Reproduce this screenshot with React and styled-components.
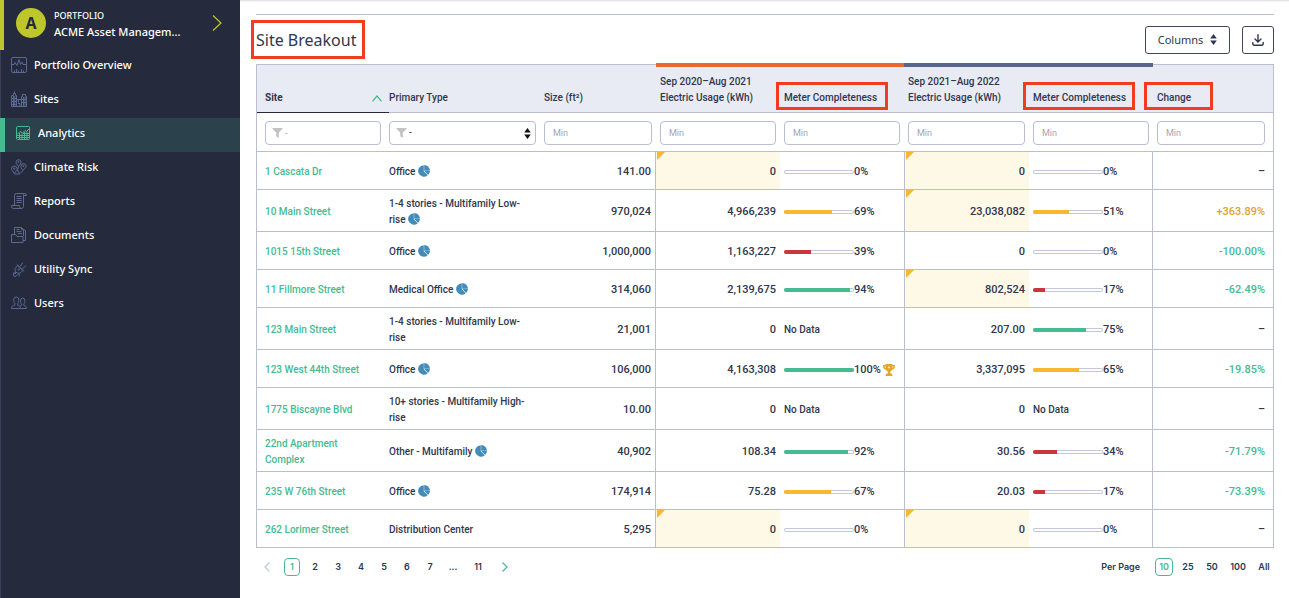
import React from 'react';
import styled, { createGlobalStyle } from 'styled-components';

const GlobalStyle = createGlobalStyle`
    *, *::before, *::after {
        box-sizing: border-box;
    }

    body {
        margin: 0;
        background: #ffffff;
        color: #2f374e;
        font-family: Roboto, "Liberation Sans", sans-serif;
        font-size: 10px;
        line-height: 16px;
    }

    button, input, select {
        font: inherit;
        color: inherit;
        margin: 0;
    }
`

const Page = styled.div`
    display: flex;
    min-height: 100vh;
`

const Sidebar = styled.nav`
    flex: 0 0 240px;
    background: #252b3d;
    box-shadow: inset 1px 0 0 #3a4157;
    color: #ffffff;
    font-family: "Noto Sans", sans-serif;
`

const Account = styled.button`
    display: flex;
    align-items: center;
    width: 100%;
    height: 50px;
    padding: 0 18px 4px 12px;
    border: 0;
    border-left: 4px solid #bdc72c;
    background: none;
    text-align: left;
`

const Avatar = styled.span`
    width: 30px;
    height: 30px;
    margin-right: 8px;
    border-radius: 50%;
    background: #bdc72c;
    color: #252b3d;
    font-size: 16px;
    font-weight: 700;
    line-height: 30px;
    text-align: center;
`

const AccountText = styled.span`
    flex: 1;
    display: flex;
    flex-direction: column;
    padding-top: 2px;
    font-size: 11px;
    font-weight: 500;
`

const AccountKind = styled.span`
    font-size: 9px;
`

const NavList = styled.ul`
    margin: 0;
    padding: 0;
    list-style: none;
`

const NavLink = styled.a`
    display: flex;
    align-items: center;
    gap: 7px;
    height: 34px;
    padding: 0 0 4px 10px;
    border-left: ${props => props.$active ? '5px solid #46ba91' : '1px solid transparent'};
    background: ${props => props.$active ? '#2b414c' : 'none'};
    color: #ffffff;
    font-size: 11px;
    font-weight: 500;
    text-decoration: none;

    svg {
        color: ${props => props.$active ? '#46ba91' : '#5a6a93'};
    }
`

const Main = styled.main`
    flex: 1;
    min-width: 0;
    padding: 14px 15px 0 16px;
    box-shadow: inset 0 3px 2px -2px #dcdcdf;
`

const Toolbar = styled.header`
    display: flex;
    align-items: center;
    gap: 12px;
    height: 50px;
    border-top: 1px solid #b9bfd0;
`

const TitleBox = styled.div`
    flex: 1;
`

const Title = styled.h1`
    position: relative;
    display: inline-block;
    margin: 0;
    font-family: "Noto Sans", sans-serif;
    font-size: 16px;
    font-weight: 400;
    line-height: 24px;
`

const Frame = styled.span`
    position: absolute;
    top: ${props => props.$top};
    left: ${props => props.$left};
    width: ${props => props.$width};
    height: ${props => props.$height};
    border: 3px solid #f23c22;
    pointer-events: none;
`

const ToolButton = styled.button`
    display: flex;
    align-items: center;
    justify-content: center;
    gap: 7px;
    width: ${props => props.$width};
    height: 28px;
    padding: 0;
    border: 1px solid #3f475d;
    border-radius: 3px;
    background: #ffffff;
    font-family: "Noto Sans", sans-serif;
    font-size: 11px;
`

const Table = styled.table`
    width: 100%;
    table-layout: fixed;
    border: 1px solid #b9bfd0;
    border-bottom: 0;
    border-collapse: separate;
    border-spacing: 0;
`

const Col = styled.col`
    width: ${props => props.$width};
`

const HeadCell = styled.th`
    position: relative;
    height: 48px;
    padding: 0 4px 6px;
    border-bottom: 1px solid ${props => props.$sorted ? '#252b3d' : '#b9bfd0'};
    background: #e9ebf4;
    font-weight: ${props => props.$sorted ? 700 : 500};
    text-align: left;
    vertical-align: bottom;
    white-space: nowrap;

    &:first-child {
        padding-left: 8px;
        padding-right: 7px;
    }

    &:nth-child(2) {
        padding-left: 0;
    }
`

const PeriodBar = styled.span`
    position: absolute;
    top: -2px;
    left: 0;
    right: 0;
    height: 4px;
    background: ${props => props.$color};
`

const SortButton = styled.button`
    display: flex;
    align-items: center;
    justify-content: space-between;
    width: 100%;
    padding: 0;
    border: 0;
    background: none;
`

const FilterCell = styled.td`
    height: 39px;
    padding: 2px 4px 0;
    border-bottom: 1px solid #b9bfd0;

    &:first-child {
        padding-left: 8px;
        padding-right: 8px;
    }

    &:nth-child(2) {
        padding-left: 0;
    }

    &:last-child {
        padding-right: 8px;
    }
`

const Field = styled.label`
    display: flex;
    align-items: center;
    gap: 2px;
    height: 24px;
    padding: 0 4px 0 ${props => props.$icon ? '6px' : '8px'};
    border: 1px solid #b9bfd0;
    border-radius: 4px;
    background: #ffffff;

    input, select {
        flex: 1;
        min-width: 0;
        width: 100%;
        height: 20px;
        padding: 0;
        border: 0;
        outline: 0;
        background: none;
        appearance: none;
    }

    input {
        font-size: 9px;
    }

    input::placeholder {
        color: #a3a6ae;
        opacity: 1;
    }
`

const Cell = styled.td`
    position: relative;
    height: 38px;
    padding: 6px 4px 3px;
    border-bottom: 1px solid #b9bfd0;
    background: ${props => props.$flagged ? '#fef8e6' : 'none'};
    color: ${props => props.$color || 'inherit'};
    font-weight: 500;
    text-align: left;

    &:first-child {
        padding-left: 8px;
        padding-right: 16px;
    }

    &:nth-child(2) {
        padding-left: 0;
    }

    &:nth-child(3), &:nth-child(7) {
        border-right: 1px solid #b9bfd0;
    }

    &:nth-child(6) {
        border-left: 1px solid #b9bfd0;
    }

    &:last-child {
        padding-right: 8px;
    }
`

const NumberCell = styled(Cell)`
    font-size: 11px;
    text-align: right;
`

const Flag = styled.span`
    position: absolute;
    top: 0;
    left: 1px;
    border-top: 8px solid #fbb62f;
    border-right: 8px solid transparent;
`

const SiteLink = styled.a`
    color: #46ba91;
    text-decoration: none;
`

const Completeness = styled.div`
    display: flex;
    align-items: center;
    font-size: 11px;
`

const Track = styled.span`
    width: 70px;
    height: 4px;
    border-radius: 2px;
    box-shadow: inset 0 0 0 1px #c3c8d8;
    overflow: hidden;
`

const Fill = styled.span`
    display: block;
    height: 4px;
    background: ${props => props.$color};
`

const Footer = styled.footer`
    display: flex;
    justify-content: space-between;
    align-items: center;
    padding: 10px 1px 8px 3px;
    font-family: Inter, sans-serif;
    font-size: 9px;
    font-weight: 600;
`

const Pager = styled.div`
    display: flex;
    align-items: center;
    gap: ${props => props.$gap};
`

const PageButton = styled.button`
    display: flex;
    align-items: center;
    justify-content: center;
    width: ${props => props.$width || '16px'};
    height: 18px;
    padding: 0;
    border: 1px solid ${props => props.$active ? '#46ba91' : 'transparent'};
    border-radius: 4px;
    background: none;
    color: ${props => props.$active ? '#46ba91' : 'inherit'};
`

const PerPageLabel = styled.span`
    margin-right: 9px;
`

const PieGlyph = styled.svg`
    vertical-align: -2px;
`

const TrophyGlyph = styled.svg`
    margin-left: 2px;
`

const Pie = () => (
    <PieGlyph width="12" height="12" viewBox="0 0 12 12" aria-label="Mixed use">
        <path d="M5.800.3a5.700 5.700 0 1 0 3.900 9.900L5.800 6.200Z" fill="#438bb9" />
        <path d="M6.200 0v5.800h5.800A5.800 5.800 0 0 0 6.200 0Z" fill="#438bb9" />
        <path d="M6.400 6.100h5.500a5.400 5.400 0 0 1-1.800 3.800Z" fill="#438bb9" />
    </PieGlyph>
);

const Trophy = () => (
    <TrophyGlyph width="12" height="12" viewBox="0 0 12 12" aria-label="Complete">
        <path d="M2.500 0h7v2.500Q9.500 7 7.200 7.700V9.500H8.500Q9.500 10 9.500 12H2.500Q2.500 10 3.500 9.500H4.800V7.700Q2.500 7 2.500 2.500Z" fill="#e3a52b" />
        <path d="M3 1.600H.7Q.6 4.800 3.500 5.200M9 1.600h2.300Q11.400 4.800 8.500 5.200" fill="none" stroke="#e3a52b" strokeWidth="1.400" />
        <path d="m6 2 .4.8.8.1-.6.6.1.9-.7-.4-.7.4.1-.9-.6-.6.8-.1Z" fill="#ffffff" />
    </TrophyGlyph>
);

const UpDown = ({ color }) => (
    <svg width="7" height="11" viewBox="0 0 7 11" fill={color}>
        <path d="M3.500 0 6.800 4.500H.2ZM3.500 11 .2 6.500h6.600Z" />
    </svg>
);

const Funnel = () => (
    <svg width="11" height="10" viewBox="0 0 11 10" fill="#c2c2c4">
        <path d="M0 0h11L6.800 4.700V10L4.200 8.300V4.700Z" />
    </svg>
);

const Chevron = ({ d, width, height, color }) => (
    <svg width={width} height={height} viewBox={`0 0 ${width} ${height}`} fill="none" stroke={color} strokeWidth="1.2">
        <path d={d} />
    </svg>
);

const navItems = [
    {
        label: 'Portfolio Overview',
        icon: <><rect x=".5" y=".5" width="15" height="15" rx="1.500" /><path d="M1 7.500h2l1-2 2 3 2-6 1.500 5L11 5l1 2.500h3M3.500 15.500v-2M5.500 15.500V12M7.500 15.500v-2M10.500 15.500V12M12.500 15.500v-2" /></>,
    },
    {
        label: 'Sites',
        icon: <path d="M.5 15.500V4.500h2V2.500h2v2h1v11ZM5.500 8.500h5v7h-5ZM10.500 15.500V5.500h1v-2h3v2h1v10ZM2.500 5v10M3.800 5v10M.5 7.500h5M.5 10.500h5M.5 13.500h5M7.500 9v2.500M9 12.500v3M7 12.500h2M12.500 6v9M14 6v9M11 8.500h4M11 11.500h4M3.500 2.500V.5M10.500 15.500h5" />,
    },
    {
        label: 'Analytics',
        active: true,
        icon: <><rect x="1.500" y="1.500" width="13" height="13" rx="1" /><path d="m2 9.500 3-3 2.500 1.500L10 5.500l1.500 1 3-3M4.500 8v6.500M7 8.500v6M9.500 7v7.500M12 7v7.500M2 10.500h12M2 12.500h12M8 8.500h6" /></>,
    },
    {
        label: 'Climate Risk',
        icon: <><path d="M7.500 7.500C6 5.500 5 4.500 5 3.200a2.500 2.500 0 0 1 5 0c0 1.300-1 2.300-2.500 4.300ZM3.300 14.500C1.500 12 .5 11 .5 9.800a2.800 2.800 0 0 1 5.600 0c0 1.200-1 2.200-2.800 4.700ZM12 11.500C10.500 9.500 9.800 8.500 9.800 7.300a2.700 2.700 0 0 1 5.400 0c0 1.200-1.700 2.200-3.200 4.200ZM3.300 15h5l3.700-3.500M7.500 7.500l-1 3.500 2 4" /><circle cx="7.500" cy="3" r=".6" /><circle cx="3.300" cy="9.600" r=".8" /><circle cx="12.500" cy="7" r=".7" /></>,
    },
    {
        label: 'Reports',
        icon: <path d="M3.500 12.500V2.500a2 2 0 0 1 2-2h8a2 2 0 0 1 2 2h-3v11a2 2 0 0 1-2 2h-8a2 2 0 0 1-2-2v-1h8v1a2 2 0 0 0 2 2M12.500 2.500a2 2 0 0 1 1-2M5.500 3.500h5M5.500 5.500h5M5.500 7.500h5M5.500 9.500h5" />,
    },
    {
        label: 'Documents',
        icon: <path d="M.5 7.500h4l1.500 2h6v6H.5ZM3.500 7V.5h7l2 2V9M10.500.5v2h2l2 1v10H12M5.500 2.500h3M5.500 4.500h5M7 6.500h4" />,
    },
    {
        label: 'Utility Sync',
        icon: <><path d="m7 4.500 5 5-2 2c-1.500 1-3.500 1-5-.3-1.300-1.500-1.300-3.500-.2-4.700ZM6 3.500l7 7M9 5.500 12 1.500M11.500 8 15 4.500M5 11.200l-2.500 2M5 13l-2-1.500C1.500 13 2.500 15.500 4 15.500c2 0 2-2.500 3.500-2.500s1 2 .5 2.500" /><circle cx="7.800" cy="8.500" r=".7" /></>,
    },
    {
        label: 'Users',
        icon: <path d="M.5 13.500c0-2 1-2.500 3-3.200L4 8.800C2.800 7.500 2.500 5.500 2.800 4A2.500 2.500 0 0 1 7.700 4c.3 1.500 0 3.500-1.200 4.800l.3 1.500c1.700.7 2.700 1.200 2.700 3.200ZM9.500 13.500h6c0-1.800-.8-2.500-2.500-3l-.3-1.300c1-1 1.300-2.700 1.100-4a2.100 2.100 0 0 0-4.200 0c-.2 1.300.1 3 1.100 4l-.3 1.300-1.200.5" />,
    },
];

const GREEN = '#46ba91';
const YELLOW = '#fbb62f';
const RED = '#c8373d';

const rows = [
    { site: '1 Cascata Dr', type: 'Office', pie: true, size: '141.00', a: '0', aFlag: true, aPct: 0, b: '0', bFlag: true, bPct: 0, change: '–' },
    { site: '10 Main Street', type: '1-4 stories - Multifamily Low-rise', pie: true, size: '970,024', a: '4,966,239', aPct: 69, b: '23,038,082', bFlag: true, bPct: 51, change: '+363.89%' },
    { site: '1015 15th Street', type: 'Office', pie: true, size: '1,000,000', a: '1,163,227', aPct: 39, b: '0', bPct: 0, change: '-100.00%' },
    { site: '11 Fillmore Street', type: 'Medical Office', pie: true, size: '314,060', a: '2,139,675', aPct: 94, b: '802,524', bFlag: true, bPct: 17, change: '-62.49%' },
    { site: '123 Main Street', type: '1-4 stories - Multifamily Low-rise', size: '21,001', a: '0', aPct: null, b: '207.00', bPct: 75, change: '–' },
    { site: '123 West 44th Street', type: 'Office', pie: true, size: '106,000', a: '4,163,308', aPct: 100, b: '3,337,095', bPct: 65, change: '-19.85%' },
    { site: '1775 Biscayne Blvd', type: '10+ stories - Multifamily High-rise', size: '10.00', a: '0', aPct: null, b: '0', bPct: null, change: '–' },
    { site: '22nd Apartment Complex', type: 'Other - Multifamily', pie: true, size: '40,902', a: '108.34', aPct: 92, b: '30.56', bPct: 34, change: '-71.79%' },
    { site: '235 W 76th Street', type: 'Office', pie: true, size: '174,914', a: '75.28', aPct: 67, b: '20.03', bPct: 17, change: '-73.39%' },
    { site: '262 Lorimer Street', type: 'Distribution Center', size: '5,295', a: '0', aFlag: true, aPct: 0, b: '0', bFlag: true, bPct: 0, change: '–' },
];

const barColor = pct => {
    if (pct >= 75) return GREEN;
    if (pct >= 50) return YELLOW;
    return RED;
}

const changeColor = change => {
    if (change[0] === '+') return '#dfa32b';
    if (change[0] === '-') return GREEN;
    return undefined;
}

const Meter = ({ pct }) => {
    if (pct === null) return 'No Data';
    return (
        <Completeness>
            <Track><Fill $color={barColor(pct)} style={{ width: `${pct}%` }} /></Track>
            {pct}%
            {pct === 100 && <Trophy />}
        </Completeness>
    );
}

const MinField = ({ label }) => (
    <FilterCell>
        <Field><input placeholder="Min" aria-label={label} /></Field>
    </FilterCell>
);

const SiteRow = ({ row }) => (
    <tr>
        <Cell><SiteLink href="#site">{row.site}</SiteLink></Cell>
        <Cell>{row.type} {row.pie && <Pie />}</Cell>
        <NumberCell>{row.size}</NumberCell>
        <NumberCell $flagged={row.aFlag}>{row.aFlag && <Flag />}{row.a}</NumberCell>
        <Cell><Meter pct={row.aPct} /></Cell>
        <NumberCell $flagged={row.bFlag}>{row.bFlag && <Flag />}{row.b}</NumberCell>
        <Cell><Meter pct={row.bPct} /></Cell>
        <NumberCell $color={changeColor(row.change)}>{row.change}</NumberCell>
    </tr>
);

const App = () => {
    return(
        <Page>
            <GlobalStyle />
            <Sidebar>
                <Account>
                    <Avatar>A</Avatar>
                    <AccountText>
                        <AccountKind>PORTFOLIO</AccountKind>
                        ACME Asset Managem...
                    </AccountText>
                    <Chevron width={10} height={16} color="#bdc72c" d="M1 .5 9 8 1 15.500" />
                </Account>
                <NavList>
                    {navItems.map(item => (
                        <li key={item.label}>
                            <NavLink href="#nav" $active={item.active}>
                                <svg width="16" height="16" viewBox="0 0 16 16" fill="none" stroke="currentColor">{item.icon}</svg>
                                {item.label}
                            </NavLink>
                        </li>
                    ))}
                </NavList>
            </Sidebar>
            <Main>
                <Toolbar>
                    <TitleBox>
                        <Title>
                            Site Breakout
                            <Frame $top="-8px" $left="-5px" $width="114px" $height="39px" />
                        </Title>
                    </TitleBox>
                    <ToolButton $width="85px">Columns <UpDown color="#2f374e" /></ToolButton>
                    <ToolButton $width="32px" aria-label="Download">
                        <svg width="12" height="12" viewBox="0 0 12 12" fill="none" stroke="#2f374e" strokeWidth="1.4" strokeLinecap="round">
                            <path d="M6 .7v7M3 5l3 3 3-3M.8 8.500v1.200q0 1.500 1.500 1.500h7.400q1.500 0 1.500-1.500V8.500" />
                        </svg>
                    </ToolButton>
                </Toolbar>
                <Table>
                    <colgroup>
                        <Col $width="132px" />
                        <Col $width="151px" />
                        <Col $width="116px" />
                        <Col $width="124px" />
                        <Col $width="124px" />
                        <Col $width="125px" />
                        <Col $width="124px" />
                        <Col $width="120px" />
                    </colgroup>
                    <thead>
                        <tr>
                            <HeadCell $sorted>
                                <SortButton>Site <Chevron width={10} height={7} color={GREEN} d="M.5 6.300 5 1l4.500 5.300" /></SortButton>
                            </HeadCell>
                            <HeadCell>Primary Type</HeadCell>
                            <HeadCell>Size (ft²)</HeadCell>
                            <HeadCell><PeriodBar $color="#ee682b" />Sep 2020–Aug 2021<br />Electric Usage (kWh)</HeadCell>
                            <HeadCell>
                                <PeriodBar $color="#ee682b" />
                                Meter Completeness
                                <Frame $top="17px" $left="-4px" $width="112px" $height="28px" />
                            </HeadCell>
                            <HeadCell><PeriodBar $color="#59668b" />Sep 2021–Aug 2022<br />Electric Usage (kWh)</HeadCell>
                            <HeadCell>
                                <PeriodBar $color="#59668b" />
                                Meter Completeness
                                <Frame $top="17px" $left="-6px" $width="112px" $height="28px" />
                            </HeadCell>
                            <HeadCell>
                                Change
                                <Frame $top="17px" $left="-9px" $width="69px" $height="28px" />
                            </HeadCell>
                        </tr>
                    </thead>
                    <tbody>
                        <tr>
                            <FilterCell>
                                <Field $icon><Funnel /><input placeholder="-" aria-label="Site" /></Field>
                            </FilterCell>
                            <FilterCell>
                                <Field $icon>
                                    <Funnel />
                                    <select aria-label="Primary Type"><option>-</option></select>
                                    <UpDown color="#111111" />
                                </Field>
                            </FilterCell>
                            <MinField label="Size" />
                            <MinField label="Electric usage 2020-2021" />
                            <MinField label="Meter completeness 2020-2021" />
                            <MinField label="Electric usage 2021-2022" />
                            <MinField label="Meter completeness 2021-2022" />
                            <MinField label="Change" />
                        </tr>
                        {rows.map(row => <SiteRow key={row.site} row={row} />)}
                    </tbody>
                </Table>
                <Footer>
                    <Pager $gap="9px">
                        <PageButton aria-label="Previous page"><Chevron width={6} height={10} color="#c3c8d8" d="M5.500.5 1 5l4.500 4.500" /></PageButton>
                        <Pager $gap="7px">
                            <PageButton $active>1</PageButton>
                            {[2, 3, 4, 5, 6, 7].map(n => <PageButton key={n}>{n}</PageButton>)}
                            <PageButton>...</PageButton>
                            <PageButton $width="20px">11</PageButton>
                        </Pager>
                        <PageButton aria-label="Next page"><Chevron width={6} height={10} color={GREEN} d="M.5.5 5 5 .5 9.500" /></PageButton>
                    </Pager>
                    <Pager $gap="6px">
                        <PerPageLabel>Per Page</PerPageLabel>
                        <PageButton $width="18px" $active>10</PageButton>
                        <PageButton $width="18px">25</PageButton>
                        <PageButton $width="18px">50</PageButton>
                        <PageButton $width="22px">100</PageButton>
                        <PageButton $width="18px">All</PageButton>
                    </Pager>
                </Footer>
            </Main>
        </Page>
    );
}

export default App;
